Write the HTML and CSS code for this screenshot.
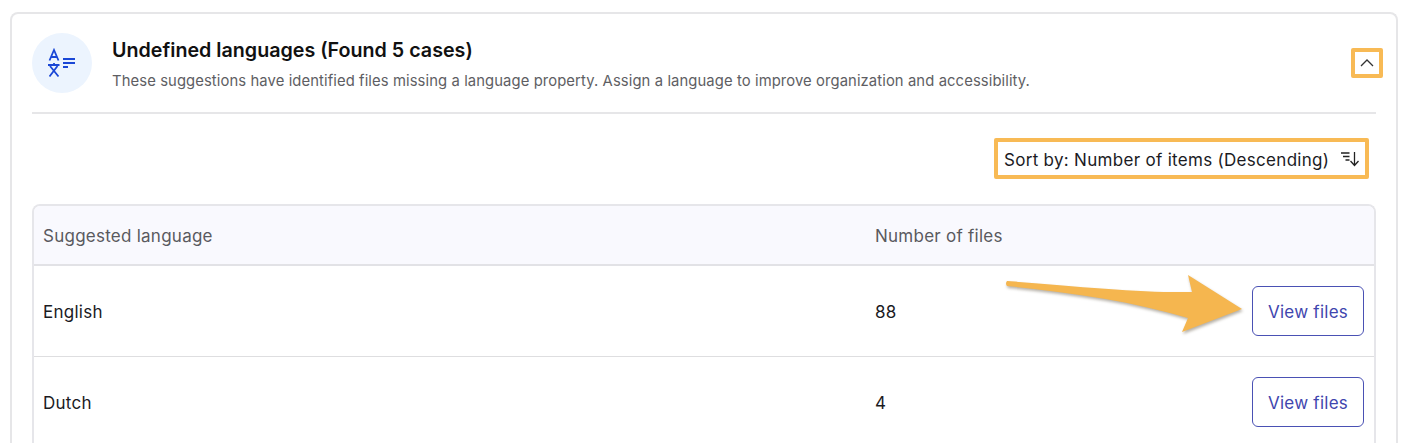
FILE: index.html
```html
<!DOCTYPE html>
<html lang="en">
<head>
<meta charset="utf-8">
<title>Undefined languages</title>
<link rel="stylesheet" href="styles.css">
</head>
<body>
<section class="card">
  <header class="head">
    <div class="badge">
      <svg width="30" height="30" viewBox="0 0 30 30" fill="none" stroke="#1a47d6" stroke-width="1.8">
        <path d="M2.500 12.500 L7 2 L11.500 12.500 M4 9 H10"/>
        <path d="M1 17 H12.500 M7 15 V17 M2.500 28.500 L10.500 18 M3 18 L11.500 28.500"/>
        <path d="M16 11 H28 M16 15 H28 M16 19 H21"/>
      </svg>
    </div>
    <div class="head-text">
      <h2 class="title">Undefined languages (Found 5 cases)</h2>
      <p class="desc">These suggestions have identified files missing a language property. Assign a language to improve organization and accessibility.</p>
    </div>
    <button class="toggle" aria-label="Collapse">
      <svg width="16" height="10" viewBox="0 0 16 10" fill="none" stroke="#333" stroke-width="1.300"><path d="M2 8 L8 2 L14 8"/></svg>
    </button>
  </header>
  <div class="sort-row">
    <button class="sort">
      <span class="sort-label">Sort by: Number of items (Descending)</span>
      <svg width="20" height="18" viewBox="0 0 20 18" fill="none" stroke="#222" stroke-width="1.3"><path d="M1 3 H9.500 M3 6.500 H9.500 M5.500 10 H9.500 M14.500 2 V15 M10.500 11 L14.500 15.500 L18.500 11"/></svg>
    </button>
  </div>
  <div class="table">
    <div class="row row-head"><span class="c1">Suggested language</span><span class="c2">Number of files</span></div>
    <div class="row"><span class="c1">English</span><span class="c2">88</span><button class="view">View files</button></div>
    <div class="row"><span class="c1">Dutch</span><span class="c2">4</span><button class="view">View files</button></div>
  </div>
</section>
<svg class="arrow" width="238" height="58" viewBox="0 0 238 58"><path d="M2 6 Q0 8.500 2 11 C70 18 130 27 183 43 L177 57 L237 34 L183 0 L187 17 C140 18 80 12 2 6 Z"/></svg>
</body>
</html>
```
FILE: styles.css
```css
* { box-sizing: border-box; }
html, body { margin: 0; height: 443px; overflow: hidden; background: #fff; }
body { position: relative; padding: 12px 12px 0 10px; font-family: Inter, "Liberation Sans", sans-serif; color: #1b1b1f; }
.card { border: 2px solid #e6e6e8; border-bottom: 0; border-radius: 8px 8px 0 0; padding: 0 20px; height: 431px; overflow: hidden; }
.head { display: flex; align-items: flex-start; height: 100px; border-bottom: 2px solid #e6e6e8; padding-top: 19px; }
.badge { width: 60px; height: 60px; flex: none; border-radius: 50%; background: #ecf4fe; display: flex; align-items: center; justify-content: center; }
.head-text { flex: 1; margin-left: 20px; padding-top: 5px; }
.title { margin: 0; font-size: 19.700px; line-height: 24px; font-weight: 600; color: #111; }
.desc { margin: 9px 0 0; font-size: 14.800px; line-height: 20px; color: #5e5e63; letter-spacing: .1px; }
.toggle { width: 32px; height: 30px; margin: 15px -7px 0 0; border: 4px solid #f8ba55; border-radius: 2px; background: #fff; padding: 0; display: flex; align-items: center; justify-content: center; }
.sort-row { display: flex; justify-content: flex-end; padding: 24px 7px 0 0; }
.sort { display: flex; align-items: center; justify-content: space-between; width: 375px; height: 41px; padding: 0 5px 0 6px; border: 4px solid #f8ba55; border-radius: 2px; background: #fff; font: inherit; font-size: 17px; color: #1b1b1f; letter-spacing: .3px; }
.sort-label { padding-top: 2px; }
.table { margin-top: 25px; border: 2px solid #e6e6ea; border-bottom: 0; border-radius: 8px 8px 0 0; }
.row { display: flex; align-items: center; height: 91px; border-bottom: 1px solid #dedee0; padding: 0 10px 0 9px; font-size: 17px; letter-spacing: .25px; }
.row-head { height: 60px; background: #f9f9fe; border-radius: 6px 6px 0 0; color: #5a5a5f; border-bottom: 2px solid #e2e2e6; }
.c1 { width: 832px; flex: none; padding-top: 2px; }
.c2 { flex: 1; padding-top: 2px; }
.view { width: 112px; height: 50px; border: 1.500px solid #4a51b4; border-radius: 6px; background: #fff; color: #3f46ae; font: inherit; font-size: 17px; letter-spacing: .25px; padding: 1px 0 0; }
.arrow { position: absolute; left: 1005px; top: 275px; overflow: visible; fill: #f5b64f; filter: drop-shadow(1px 2px 1.500px rgba(90,80,60,.45)); }
```
